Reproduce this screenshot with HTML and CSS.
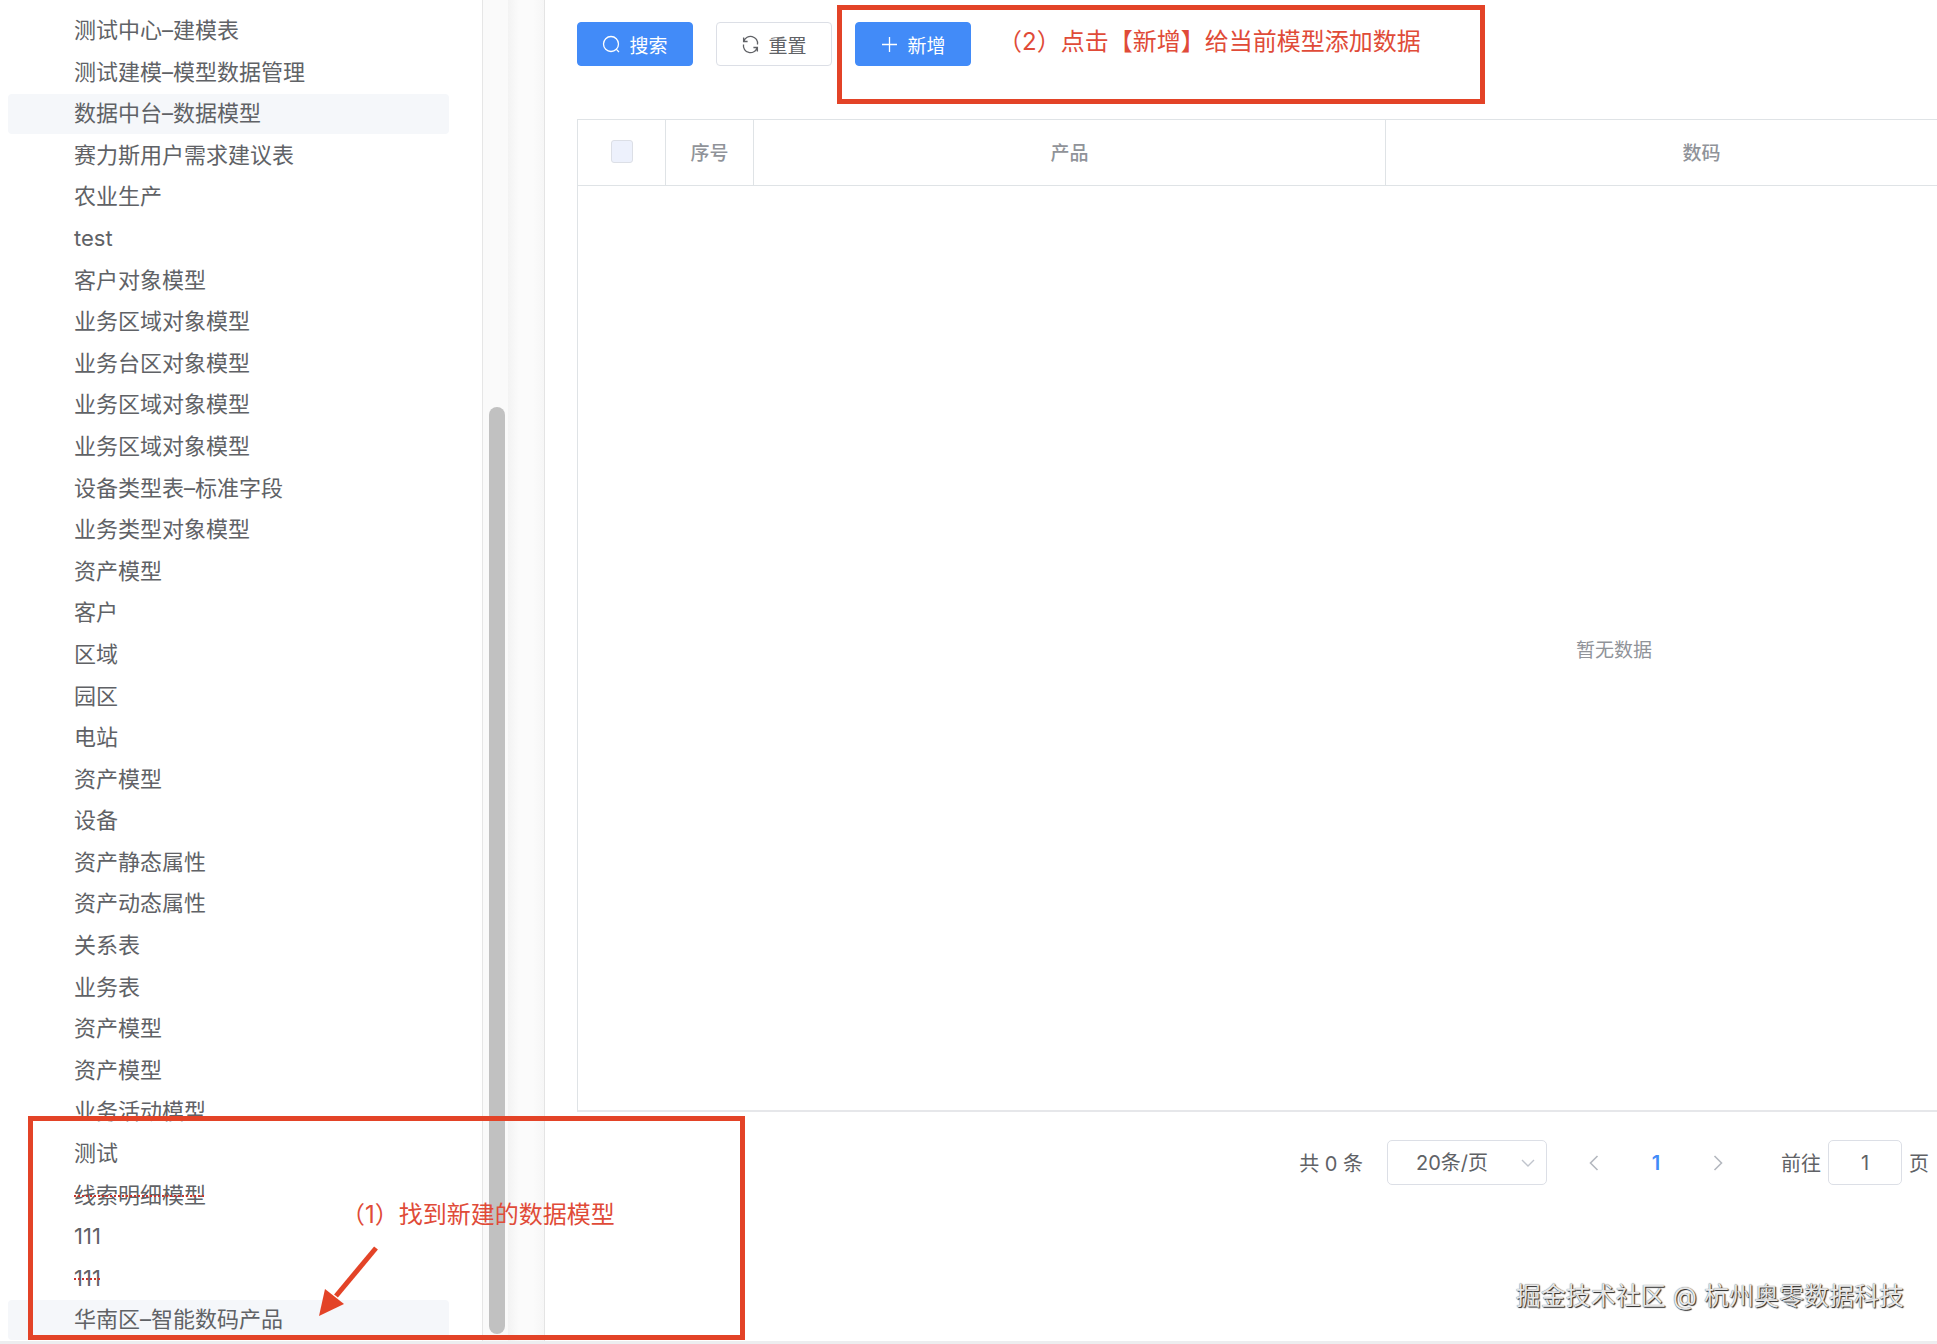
FILE: index.html
```html
<!DOCTYPE html>
<html lang="zh-CN">
<head>
<meta charset="utf-8">
<title>模型数据管理</title>
<link rel="stylesheet" href="styles.css">
</head>
<body>
<div class="layout">
  <nav class="sidebar" aria-label="数据模型">
    <ul class="tree">
      <li><a class="node" href="#">测试中心–建模表</a></li>
      <li><a class="node" href="#">测试建模–模型数据管理</a></li>
      <li><a class="node node-active" href="#">数据中台–数据模型</a></li>
      <li><a class="node" href="#">赛力斯用户需求建议表</a></li>
      <li><a class="node" href="#">农业生产</a></li>
      <li><a class="node" href="#">test</a></li>
      <li><a class="node" href="#">客户对象模型</a></li>
      <li><a class="node" href="#">业务区域对象模型</a></li>
      <li><a class="node" href="#">业务台区对象模型</a></li>
      <li><a class="node" href="#">业务区域对象模型</a></li>
      <li><a class="node" href="#">业务区域对象模型</a></li>
      <li><a class="node" href="#">设备类型表–标准字段</a></li>
      <li><a class="node" href="#">业务类型对象模型</a></li>
      <li><a class="node" href="#">资产模型</a></li>
      <li><a class="node" href="#">客户</a></li>
      <li><a class="node" href="#">区域</a></li>
      <li><a class="node" href="#">园区</a></li>
      <li><a class="node" href="#">电站</a></li>
      <li><a class="node" href="#">资产模型</a></li>
      <li><a class="node" href="#">设备</a></li>
      <li><a class="node" href="#">资产静态属性</a></li>
      <li><a class="node" href="#">资产动态属性</a></li>
      <li><a class="node" href="#">关系表</a></li>
      <li><a class="node" href="#">业务表</a></li>
      <li><a class="node" href="#">资产模型</a></li>
      <li><a class="node" href="#">资产模型</a></li>
      <li><a class="node" href="#">业务活动模型</a></li>
      <li><a class="node" href="#">测试</a></li>
      <li><a class="node node-removed" href="#">线索明细模型</a></li>
      <li><a class="node" href="#">111</a></li>
      <li><a class="node node-removed" href="#">111</a></li>
      <li><a class="node node-active" href="#">华南区–智能数码产品</a></li>
    </ul>
  </nav>
  <div class="track"><div class="thumb"></div></div>
  <div class="divider"></div>
  <main class="main">
    <div class="toolbar">
      <button class="btn btn-primary" type="button">
        <svg class="icon" viewBox="0 0 19 19" aria-hidden="true"><circle cx="9" cy="9" r="7.5"/><path d="M14.4 14.4 17 17"/></svg>搜索
      </button>
      <button class="btn" type="button">
        <svg class="icon" viewBox="0 0 19 19" aria-hidden="true"><path d="M2.600 2.500v4h4M2.900 6.300A7 7 0 0 1 16.500 9.500M16.400 16.500v-4h-4M16.100 12.700A7 7 0 0 1 2.500 9.500"/></svg>重置
      </button>
      <button class="btn btn-primary" type="button">
        <svg class="icon" viewBox="0 0 19 19" aria-hidden="true"><path d="M9.5 2v15M2 9.500h15"/></svg>新增
      </button>
    </div>
    <div class="table-wrap">
      <table class="table">
        <colgroup><col class="col-small"><col class="col-small"><col><col><col></colgroup>
        <thead>
          <tr><th><input class="check" type="checkbox" aria-label="全选"></th><th>序号</th><th>产品</th><th>数码</th><th></th></tr>
        </thead>
        <tbody>
          <tr><td class="empty" colspan="5">暂无数据</td></tr>
        </tbody>
      </table>
    </div>
    <div class="pagination">
      <span class="total">共 0 条</span>
      <div class="size">
        <select class="size-select" aria-label="每页条数"><option>20条/页</option></select>
        <svg class="size-arrow" viewBox="0 0 14 14" aria-hidden="true"><path d="M1 4l6 6 6-6"/></svg>
      </div>
      <div class="pager">
        <button class="page" type="button" aria-label="上一页"><svg class="arrow" viewBox="0 0 16 16" aria-hidden="true"><path d="M11.500 1 4.500 8l7 7"/></svg></button>
        <button class="page page-current" type="button">1</button>
        <button class="page" type="button" aria-label="下一页"><svg class="arrow" viewBox="0 0 16 16" aria-hidden="true"><path d="M4.500 1l7 7-7 7"/></svg></button>
      </div>
      <label class="jump">前往<input class="jump-input" type="text" value="1">页</label>
    </div>
  </main>
</div>
<div class="mark mark-add"></div>
<p class="note note-add">（2）点击【新增】给当前模型添加数据</p>
<div class="mark mark-find"></div>
<p class="note note-find">（1）找到新建的数据模型</p>
<svg class="pointer" viewBox="0 0 64 76" aria-hidden="true"><path class="pointer-line" d="M58 5 18 53"/><path class="pointer-head" d="M1 73 7 46 26 61z"/></svg>
<p class="watermark">掘金技术社区 @ 杭州奥零数据科技</p>
</body>
</html>
```
FILE: styles.css
```css
* {
  box-sizing: border-box;
}

body {
  position: relative;
  margin: 0;
  background: #fff;
  color: #606266;
  font-family: Inter, "Noto Sans CJK SC", sans-serif;
  font-size: 20px;
  overflow-x: hidden;
}

button,
input,
select {
  font: inherit;
  color: inherit;
}

.layout {
  display: grid;
  grid-template-columns: 482px 26px 37px minmax(0, 1fr);
  min-height: 100vh;
  border-bottom: 3px solid #ededef;
}

/* Model tree */
.sidebar {
  display: flex;
  padding: 9px 33px 1px 8px;
}

.tree {
  display: grid;
  grid-auto-rows: 1fr;
  flex: 1;
  margin: 0;
  padding: 0;
  list-style: none;
}

.tree li {
  display: flex;
  padding-top: 2px;
}

.node {
  flex: 1;
  padding-left: 66px;
  border-radius: 4px;
  color: #606266;
  font-size: 22px;
  line-height: 38px;
  text-decoration: none;
}

.node-active {
  background: #f5f7fa;
}

.node-removed {
  text-decoration: line-through dotted #c9332b 2px;
}

.track {
  display: grid;
  grid-template-rows: 407fr 927fr;
  padding: 0 3px 7px 6px;
  border-left: 1px solid #e6e6e6;
  background: #fafafa;
}

.thumb {
  grid-row: 2;
  border-radius: 8px;
  background: #c1c1c1;
}

.divider {
  border-right: 1px solid #e4e4e4;
  background: linear-gradient(90deg, #f3f3f3, #fbfbfb 30%, #fbfbfb 70%, #f6f6f6);
}

/* Content */
.main {
  display: flex;
  flex-direction: column;
  padding: 22px 0 156px 32px;
}

.toolbar {
  display: flex;
  gap: 23px;
  margin-bottom: 53px;
}

.btn {
  display: flex;
  align-items: center;
  justify-content: center;
  gap: 8px;
  width: 116px;
  height: 44px;
  padding: 0;
  border: 1px solid #dcdfe6;
  border-radius: 4px;
  background: #fff;
  font-size: 19px;
}

.btn-primary {
  border-color: #428bf8;
  background: #428bf8;
  color: #fff;
}

.icon {
  width: 19px;
  height: 19px;
  fill: none;
  stroke: currentColor;
  stroke-width: 1.3;
}

.table-wrap {
  display: grid;
  grid-template-columns: 2072px;
  flex: 1;
  overflow: hidden;
  border-top: 1px solid #dfe3e6;
  border-bottom: 2px solid #e6e7ea;
  border-left: 1px solid #dfe3e6;
}

.table {
  width: 100%;
  table-layout: fixed;
  border-collapse: separate;
  border-spacing: 0;
  color: #909399;
  font-size: 19px;
}

.col-small {
  width: 88px;
}

.table th {
  height: 66px;
  padding: 0 0 2px;
  border-right: 1px solid #dfe3e6;
  border-bottom: 1px solid #dfe3e6;
  font-weight: 500;
}

.check {
  display: block;
  width: 22px;
  height: 23px;
  margin: 0 auto;
  border: 1px solid #dcdfe6;
  border-radius: 3px;
  background: #edf1fc;
  appearance: none;
}

.empty {
  padding: 0;
  text-align: center;
}

.pagination {
  display: flex;
  align-items: center;
  justify-content: flex-end;
  padding: 28px 8px 0 0;
}

.total {
  margin-right: 24px;
}

.size {
  display: grid;
  align-items: center;
  width: 160px;
  margin-right: 24px;
}

.size-select {
  grid-area: 1 / 1;
  height: 45px;
  padding: 0 28px;
  border: 1px solid #dcdfe6;
  border-radius: 5px;
  background: #fff;
  appearance: none;
}

.size-arrow {
  grid-area: 1 / 1;
  justify-self: end;
  width: 14px;
  height: 14px;
  margin-right: 12px;
  fill: none;
  stroke: #c0c4cc;
  stroke-width: 1.4;
}

.pager {
  display: flex;
  gap: 16px;
  margin-right: 40px;
}

.page {
  display: flex;
  align-items: center;
  justify-content: center;
  width: 46px;
  height: 45px;
  padding: 0;
  border: 0;
  background: none;
}

.page-current {
  color: #428bf8;
  font-weight: 600;
}

.arrow {
  width: 16px;
  height: 16px;
  fill: none;
  stroke: #b4b8bf;
  stroke-width: 1.6;
}

.jump {
  display: flex;
  align-items: center;
  gap: 7px;
}

.jump-input {
  width: 74px;
  height: 45px;
  padding: 0;
  border: 1px solid #dcdfe6;
  border-radius: 5px;
  text-align: center;
}

/* Tutorial annotations laid over the page */
.mark {
  position: absolute;
  border: 5px solid #e34327;
}

.mark-add {
  top: 5px;
  left: 837px;
  width: 648px;
  height: 99px;
}

.mark-find {
  top: 1116px;
  left: 28px;
  width: 717px;
  height: 224px;
}

.note {
  position: absolute;
  margin: 0;
  color: #e04b38;
  font-size: 24px;
  line-height: 32px;
  white-space: nowrap;
}

.note-add {
  top: 26px;
  left: 998px;
}

.note-find {
  top: 1199px;
  left: 341px;
}

.pointer {
  position: absolute;
  top: 1243px;
  left: 318px;
  width: 64px;
  height: 76px;
}

.pointer-line {
  stroke: #e34327;
  stroke-width: 5;
}

.pointer-head {
  fill: #e34327;
}

.watermark {
  position: absolute;
  right: 33px;
  bottom: 31px;
  margin: 0;
  color: #e6e6e6;
  font-size: 25px;
  line-height: 34px;
  text-shadow: 1px 1px 1px #222, 0 0 1px #555;
  white-space: nowrap;
}
```
